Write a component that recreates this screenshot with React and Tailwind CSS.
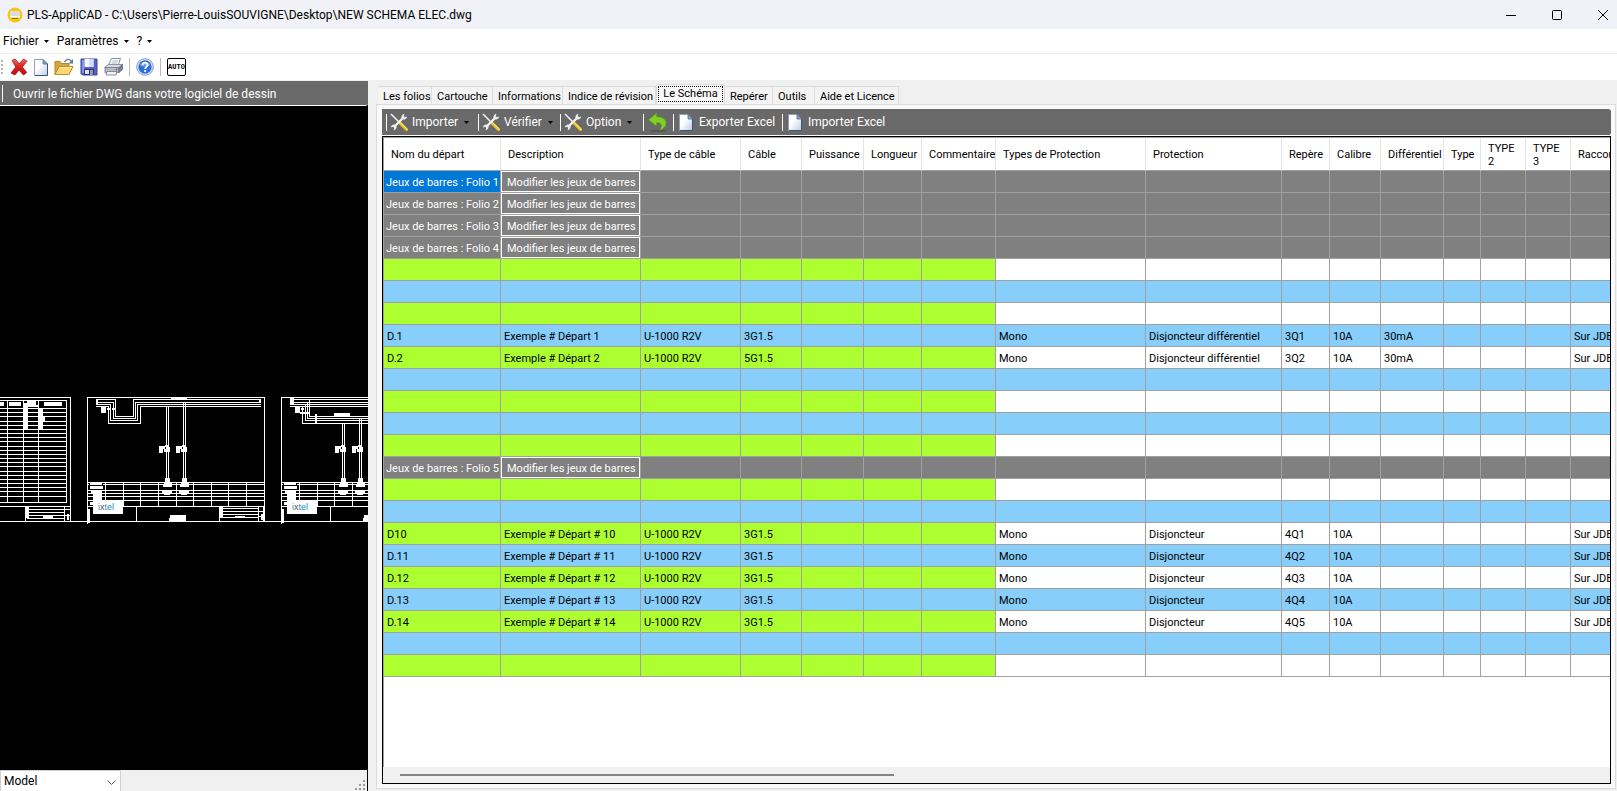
const columns = [
  { label: 'Nom du départ', width: 'w-[117px]' },
  { label: 'Description', width: 'w-[140px]' },
  { label: 'Type de câble', width: 'w-[100px]' },
  { label: 'Câble', width: 'w-[61px]' },
  { label: 'Puissance', width: 'w-[62px]' },
  { label: 'Longueur', width: 'w-[58px]' },
  { label: 'Commentaire', width: 'w-[74px]' },
  { label: 'Types de Protection', width: 'w-[150px]' },
  { label: 'Protection', width: 'w-[136px]' },
  { label: 'Repère', width: 'w-[48px]' },
  { label: 'Calibre', width: 'w-[51px]' },
  { label: 'Différentiel', width: 'w-[63px]' },
  { label: 'Type', width: 'w-[37px]' },
  { label: 'TYPE 2', width: 'w-[45px]' },
  { label: 'TYPE 3', width: 'w-[45px]' },
  { label: 'Raccordement', width: 'w-[90px]' },
]

const bar = (n) => ({ kind: 'bar', name: `Jeux de barres : Folio ${n}` })
const green = (cells = []) => ({ kind: 'green', cells })
const blue = (cells = []) => ({ kind: 'blue', cells })
const line = (name, desc, cable, prot, rep, diff = '') => [
  name, desc, 'U-1000 R2V', cable, '', '', '', 'Mono', prot, rep, '10A', diff, '', '', '', 'Sur JDB',
]

const rows = [
  bar(1),
  bar(2),
  bar(3),
  bar(4),
  green(),
  blue(),
  green(),
  blue(line('D.1', 'Exemple # Départ 1', '3G1.5', 'Disjoncteur différentiel', '3Q1', '30mA')),
  green(line('D.2', 'Exemple # Départ 2', '5G1.5', 'Disjoncteur différentiel', '3Q2', '30mA')),
  blue(),
  green(),
  blue(),
  green(),
  bar(5),
  green(),
  blue(),
  green(line('D10', 'Exemple # Départ # 10', '3G1.5', 'Disjoncteur', '4Q1')),
  blue(line('D.11', 'Exemple # Départ # 11', '3G1.5', 'Disjoncteur', '4Q2')),
  green(line('D.12', 'Exemple # Départ # 12', '3G1.5', 'Disjoncteur', '4Q3')),
  blue(line('D.13', 'Exemple # Départ # 13', '3G1.5', 'Disjoncteur', '4Q4')),
  green(line('D.14', 'Exemple # Départ # 14', '3G1.5', 'Disjoncteur', '4Q5')),
  blue(),
  green(),
]

const tabs = [
  { label: 'Les folios', width: 'w-[54px]' },
  { label: 'Cartouche', width: 'w-[61px]' },
  { label: 'Informations', width: 'w-[70px]' },
  { label: 'Indice de révision', width: 'w-[93px]' },
  { label: 'Le Schéma', width: 'w-[69px]', active: true },
  { label: 'Repérer', width: 'w-[48px]' },
  { label: 'Outils', width: 'w-[42px]' },
  { label: 'Aide et Licence', width: 'w-[84px]' },
]

function Caret() {
  return (
    <svg width="5" height="3" viewBox="0 0 5 3" className="shrink-0" aria-hidden="true">
      <path d="M0 0h5L2.5 3z" fill="#000" />
    </svg>
  )
}

function AppIcon() {
  return (
    <svg width="16" height="16" viewBox="0 0 16 16" aria-hidden="true">
      <circle cx="8" cy="8" r="7.5" fill="#fcc40c" />
      <rect x="3" y="4" width="10" height="6" rx="1" fill="#d9dde0" />
      <path d="M3 9h10v1.500H3z" fill="#fff" />
      <path d="M5 11.500h6" stroke="#8c6d10" />
    </svg>
  )
}

function CrossIcon() {
  return (
    <svg width="18" height="18" viewBox="0 0 18 18" aria-hidden="true">
      <defs>
        <linearGradient id="cross" x1="0" y1="0" x2="0" y2="1">
          <stop offset="0" stopColor="#ef7468" />
          <stop offset="0.45" stopColor="#d8241c" />
          <stop offset="1" stopColor="#b80e10" />
        </linearGradient>
      </defs>
      <path
        d="M2 2.500 5 1l4.200 4.800L13.500 1 17 3.200 12.300 9l4.500 5.500-3.300 2.500-4.500-4.800L4.800 17 1 15l4.800-6z"
        fill="url(#cross)"
        stroke="#a8141a"
        strokeWidth="0.800"
      />
    </svg>
  )
}

function PageIcon() {
  return (
    <svg width="14" height="17" viewBox="0 0 14 17" className="shrink-0" aria-hidden="true">
      <defs>
        <linearGradient id="page" x1="0" y1="0" x2="1" y2="1">
          <stop offset="0.4" stopColor="#fff" />
          <stop offset="1" stopColor="#b9cbe4" />
        </linearGradient>
      </defs>
      <path d="M.5.5h8.500l4.500 4.500v11.500H.5z" fill="url(#page)" stroke="#8ba0bd" />
      <path d="M13.500 5v11.500H1" fill="none" stroke="#39557d" />
      <path d="M9 .5V5h4.500z" fill="#8fa8c9" stroke="#4e6a92" strokeWidth="0.800" />
    </svg>
  )
}

function FolderIcon() {
  return (
    <svg width="20" height="18" viewBox="0 0 20 18" aria-hidden="true">
      <path d="M1 3.500h5l1.500 2H15v11H1z" fill="#d9a43a" stroke="#b9852a" />
      <path d="M1 16.500 5 8.500h14l-4 8z" fill="#fbd873" stroke="#c08a26" />
      <path d="M5.500 9.500h12" stroke="#fff0b8" />
      <path d="M10.500 4C12 .8 15 .6 17 3" fill="none" stroke="#7189a8" strokeWidth="1.500" />
      <path d="M19 1v4.500h-4.500z" fill="#5b7697" />
    </svg>
  )
}

function SaveIcon() {
  return (
    <svg width="18" height="18" viewBox="0 0 18 18" aria-hidden="true">
      <path d="M1 1h16v16H2.500L1 15.500z" fill="#5560c4" stroke="#3c4499" />
      <path d="M2 2h2v13H2z" fill="#8e98ea" />
      <rect x="4.500" y="1" width="9" height="8" fill="#f6f8ff" />
      <path d="M9 9V1h4.500v8z" fill="#d3dcf3" />
      <rect x="4" y="11" width="10" height="6" fill="#30346c" />
      <rect x="5" y="12" width="4" height="4" fill="#dfe3f0" />
      <rect x="10" y="12" width="3" height="5" fill="#9298b8" />
    </svg>
  )
}

function PrintIcon() {
  return (
    <svg width="19" height="18" viewBox="0 0 19 18" aria-hidden="true">
      <path d="M7.500.5h9L14 8H4z" fill="#fff" stroke="#8a9099" />
      <path d="M8.500 3h5.500M7.500 5h5.500" stroke="#9db0c8" />
      <path d="m1 9 3.500-2.500h14L15 10H1z" fill="#d5d9e0" stroke="#7a818c" strokeWidth="0.800" />
      <path d="M1 9.500h14v5H1z" fill="#b4bac6" stroke="#6e7684" strokeWidth="0.800" />
      <path d="m15 9.500 3.500-3v5l-3.500 3z" fill="#7b8494" stroke="#5f6877" strokeWidth="0.800" />
      <path d="M3 13.500h10L12 17H2z" fill="#eef1f6" stroke="#707988" strokeWidth="0.800" />
      <circle cx="12.500" cy="11.500" r="0.900" fill="#d8402a" />
    </svg>
  )
}

function HelpIcon() {
  return (
    <svg width="18" height="18" viewBox="0 0 18 18" aria-hidden="true">
      <circle cx="9" cy="9" r="8.300" fill="#dce7f6" stroke="#7f9cc8" />
      <circle cx="9" cy="9" r="6.700" fill="#2f6fd6" />
      <path d="M3.500 7a6 5 0 0 1 11 0c-3 2-8 2-11 0z" fill="#6fa2ee" />
      <path d="M6.600 7.200C6.600 3.700 11.600 4 11.500 7c0 1.800-2.300 1.900-2.300 3.900" fill="none" stroke="#fff" strokeWidth="1.800" />
      <circle cx="9.200" cy="13.100" r="1.100" fill="#fff" />
    </svg>
  )
}

function ToolsIcon() {
  return (
    <svg width="18" height="18" viewBox="0 0 18 18" className="shrink-0" aria-hidden="true">
      <path d="m1 1 9 9" stroke="#f5f5f5" strokeWidth="1.500" />
      <path d="m9.500 9.500 7 7" stroke="#f3c526" strokeWidth="3" strokeLinecap="round" />
      <path d="m10.500 9.500 7 7" stroke="#fff0a0" strokeWidth="0.800" />
      <path d="M13.500 4.500 4 14" stroke="#f2f2f2" strokeWidth="2.300" />
      <path d="M14.500.8a3.300 3.300 0 0 0-2.800 4.700 3.300 3.300 0 0 0 5.500-2L15 4.200 13.700 3z" fill="#ededed" />
      <path d="M3.500 17.200a3.300 3.300 0 0 0 2.800-4.700 3.300 3.300 0 0 0-5.500 2l2.200-.7L4.300 15z" fill="#ededed" />
    </svg>
  )
}

function UndoIcon() {
  return (
    <svg width="19" height="19" viewBox="0 0 19 19" className="shrink-0" aria-hidden="true">
      <ellipse cx="10" cy="18" rx="8" ry="1" fill="#555" />
      <path
        d="M8.500.3.500 6.800l8 6.200V9.700c4.500-.4 6.500 1.500 3.500 7.800 9-4.500 8-13.500-3.500-13.800z"
        fill="#7ed321"
        stroke="#5ba514"
        strokeWidth="0.600"
      />
    </svg>
  )
}

const Divider = () => <span className="h-[18px] w-px bg-[#bdbdbd]" />
const Separator = () => <span className="h-[17px] w-px shrink-0 bg-white" />

function TitleBar() {
  return (
    <header className="flex h-[29px] shrink-0 items-center bg-[#f1f2f7] pl-[7px] text-xs text-black">
      <AppIcon />
      <h1 className="ml-1 grow">PLS-AppliCAD - C:\Users\Pierre-LouisSOUVIGNE\Desktop\NEW SCHEMA ELEC.dwg</h1>
      <div className="-mr-[9px] flex">
        <button type="button" aria-label="Réduire" className="flex h-[27px] w-[46px] items-center justify-center">
          <svg width="10" height="10" viewBox="0 0 10 10">
            <path d="M0 5.500h10" stroke="#000" />
          </svg>
        </button>
        <button type="button" aria-label="Agrandir" className="flex h-[27px] w-[46px] items-center justify-center">
          <svg width="10" height="10" viewBox="0 0 10 10">
            <rect x="0.500" y="0.500" width="9" height="9" rx="1" fill="none" stroke="#000" />
          </svg>
        </button>
        <button type="button" aria-label="Fermer" className="flex h-[27px] w-[46px] items-center justify-center">
          <svg width="10" height="10" viewBox="0 0 10 10">
            <path d="m0 0 10 10M10 0 0 10" stroke="#000" />
          </svg>
        </button>
      </div>
    </header>
  )
}

function MenuBar() {
  return (
    <nav className="flex h-6 shrink-0 items-center gap-2 bg-white pl-[3px] text-xs text-black">
      {['Fichier', 'Paramètres', '?'].map((item) => (
        <button key={item} type="button" className="flex items-center gap-[5px]">
          {item}
          <Caret />
        </button>
      ))}
    </nav>
  )
}

function ToolBar() {
  return (
    <div className="flex h-[27px] shrink-0 items-center gap-[6px] border-t border-[#ececec] bg-white pl-px">
      <span className="mr-px h-[14px] border-l-2 border-dotted border-[#b4b4b4]" />
      <button type="button" aria-label="Fermer le dessin"><CrossIcon /></button>
      <button type="button" aria-label="Nouveau"><PageIcon /></button>
      <button type="button" aria-label="Ouvrir"><FolderIcon /></button>
      <button type="button" aria-label="Enregistrer"><SaveIcon /></button>
      <button type="button" aria-label="Imprimer"><PrintIcon /></button>
      <Divider />
      <button type="button" aria-label="Aide"><HelpIcon /></button>
      <Divider />
      <button
        type="button"
        className="flex h-[18px] w-[19px] items-center justify-center rounded-[2px] border border-black bg-white font-['Liberation_Mono'] text-[7px] font-bold leading-none text-black"
      >
        AUTO
      </button>
    </div>
  )
}

/* one folio of the electrical drawing, drawn from its top left corner */
function Folio({ x, children }) {
  return (
    <g transform={`translate(${x} 397)`}>
      <path d="M.5 127V.5h177v124M.5 85.500h177M0 109.500h177M49.500 110v14M132.500 110v14" />
      <path d="M0 87.500h177M0 93.500h177M0 96.500h177M0 99.500h177M0 103.500h177" />
      <path d="M18.500 86v23M36.500 86v23M53.500 86v23M71.500 86v23M89.500 86v23M106.500 86v23M124.500 86v23M141.500 86v23M159.500 86v23" />
      <path d="M133 111.500h38M133 114.500h38M133 117.500h38M133 120.500h38M171.500 110v14M176.500 110v14M171 114.500h6M171 119.500h6" />
      <path d="M133 110h3v11h-3zM148 119h10v2h-10zM174 117h3v6h-3z" fill="#fff" stroke="none" />
      <path d="M2 86h14v4H2z" fill="#000" stroke="none" />
      <path d="M3 86h12v2H3zM3 89h13v3H3zM4 94h11v2H4zM6 97h9v7H6zM3 105h10v3H3zM0 112h3v14H0z" fill="#fff" stroke="none" />
      <path d="M6 104h30v13H6z" fill="#fff" stroke="none" />
      <text x="11" y="113" fill="#2b8cbe" stroke="none" className="font-['Liberation_Sans'] text-[9px]">
        i<tspan fill="#555">x</tspan>tel
      </text>
      <path d="M83 118h16v6H82z" fill="#fff" stroke="none" />
      {children}
    </g>
  )
}

function Breaker({ x, busY }) {
  return (
    <g transform={`translate(${x} 0)`}>
      <path d={`M2.500 ${busY}V84M4.500 ${busY}V84`} />
      <path d="M-5 49h6v3h-2v4h-4zM1 48h3v2H1zM3 50h3v2H3zM0 52h6v3H0z" fill="#fff" stroke="none" />
      <path d="M1 81h5v5h2v4H-1v-3l2-2zM-2 94h10v2H6v2H0v-2h-2z" fill="#fff" stroke="none" />
    </g>
  )
}

function Drawing() {
  const tableRows = Array.from({ length: 22 }, (_, i) => Math.round(408 + i * 4.17) + 0.5)
  return (
    <svg width="368" height="664" viewBox="0 106 368 664" className="block" role="img" aria-label="Dessin">
      <g fill="none" stroke="#fff" strokeWidth="1" shapeRendering="crispEdges">
        <path d="M0 397.500h70.500V521M0 400.500h66.500v102H0M7.500 400v103M23.500 400v103M38.500 400v103" />
        {tableRows.map((y) => (
          <path key={y} d={`M0 ${y}h66`} />
        ))}
        <path
          d="M0 402h4v4H0zM9 402h12v4H9zM24 403h3v-2h9v4h2v2H24zM23 405h5v25h-5zM44 402h18v4H44zM39 408h4v8h2v5h-2v9h-4z"
          fill="#fff"
          stroke="none"
        />
        <path d="M0 506.500h70M25.500 506v15M27 509.500h38M27 512.500h38M27 515.500h38M27 518.500h38M64.500 506v15M65 509.500h5M65 515.500h5" />
        <path d="M26 506h3v12h-3zM43 515h10v3H43zM67 514h2v6h-2z" fill="#fff" stroke="none" />
        <Folio x={87}>
          <path d="M9 2.500H28.500V19.500H46.500V2.500H174M9 5.500H26.500V21.500H48.500V5.500H174M9 7.500H23.500V23.500H50.500V7.500H174M9 9.500H21.500V26.500H53.500V9.500H174" />
          <path
            d="M9 2h2v5H9zM14 10h5v6h-5zM20 11h3v2h-3zM25 11h3v2h-3zM84 0h16v2H84zM172 2h2v4h-2z"
            fill="#fff"
            stroke="none"
          />
          <Breaker x={77} busY={9} />
          <Breaker x={94} busY={6} />
        </Folio>
        <Folio x={281}>
          <path d="M9 2.500h90M9 5.500h90M9 7.500h90M9 9.500h90M28.500 2V19.500H99M26.500 5V21.500H99M24.500 7V23.500H99M21.500 9V26.500H99" />
          <path
            d="M9 1h4v7H9zM14 10h5v6h-5zM20 11h3v2h-3zM19 15h9v2h-9zM34 17h2v9h-2zM53 16h16v3H53z"
            fill="#fff"
            stroke="none"
          />
          <Breaker x={59} busY={26} />
          <Breaker x={76} busY={22} />
        </Folio>
        <path d="M0 521.500h368" />
      </g>
    </svg>
  )
}

function DrawingPane() {
  return (
    <section className="flex w-[368px] shrink-0 flex-col bg-black">
      <div className="flex h-[25px] shrink-0 items-center rounded-br-[3px] border-b border-white bg-[#696969] pl-[2px] pt-px">
        <Separator />
        <button type="button" className="ml-[10px] text-xs text-white">Ouvrir le fichier DWG dans votre logiciel de dessin</button>
      </div>
      <div className="min-h-0 grow overflow-hidden">
        <Drawing />
      </div>
      <div className="mr-px flex h-[21px] shrink-0 items-stretch justify-between bg-[#f0f0f0]">
        <div className="relative w-[121px] border border-b-0 border-[#d0d0d0] bg-white">
          <select aria-label="Espace" className="block h-5 w-full appearance-none pb-px pl-[3px] text-xs text-black outline-none">
            <option>Model</option>
          </select>
          <svg width="9" height="5" viewBox="0 0 9 5" className="pointer-events-none absolute right-1 top-[9px]">
            <path d="m.5.5 4 4 4-4" fill="none" stroke="#555" />
          </svg>
        </div>
        <svg width="11" height="11" viewBox="0 0 11 11" className="mr-px self-end" fill="#9a9a9a" aria-hidden="true">
          <path d="M8 0h2v2H8zM4 4h2v2H4zM8 4h2v2H8zM0 8h2v2H0zM4 8h2v2H4zM8 8h2v2H8z" />
        </svg>
      </div>
    </section>
  )
}

function MenuTool({ label, width }) {
  return (
    <div className={`flex items-center ${width}`}>
      <Separator />
      <button type="button" className="ml-[3px] flex items-center">
        <ToolsIcon />
        <span className="ml-1 mr-[6px]">{label}</span>
        <Caret />
      </button>
    </div>
  )
}

function ExcelTool({ label, width }) {
  return (
    <div className={`flex items-center ${width}`}>
      <Separator />
      <button type="button" className="ml-[5px] flex items-center gap-[6px]">
        <PageIcon />
        {label}
      </button>
    </div>
  )
}

function Grid() {
  return (
    <div className="flex min-h-0 grow flex-col overflow-hidden border border-black bg-white">
      <div className="min-h-0 grow overflow-hidden border-l border-t border-[#a0a0a0]">
        <table className="w-[1277px] table-fixed border-separate border-spacing-0 text-[11px] leading-[13px] text-black">
          <thead>
            <tr className="h-[33px]">
              {columns.map(({ label, width }) => (
                <th
                  key={label}
                  className={`${width} border-b border-r border-b-[#a0a0a0] border-r-[#e5e5e5] pb-0 pl-[7px] pt-px text-left align-middle font-normal`}
                >
                  {/* the two numbered types break before their digit */}
                  {label.startsWith('TYPE') ? <span className="block w-8">{label}</span> : label}
                </th>
              ))}
            </tr>
          </thead>
          <tbody>
            {rows.map((row, i) => (
              <tr key={i} className="h-[22px]">
                {columns.map(({ label }, c) => {
                  if (row.kind === 'bar') {
                    const selected = i === 0 && c === 0
                    return (
                      <td
                        key={label}
                        className={`h-[22px] whitespace-nowrap border-b border-r border-[#a0a0a0] p-0 text-white ${selected ? 'bg-[#0078d7]' : 'bg-[#808080]'}`}
                      >
                        {c === 0 && <span className="block pl-[2px] pt-px">{row.name}</span>}
                        {c === 1 && (
                          <button type="button" className="block h-[21px] w-full border border-white pl-[5px] pt-px text-left">
                            Modifier les jeux de barres
                          </button>
                        )}
                      </td>
                    )
                  }
                  let fill = 'bg-[#87cefa]'
                  if (row.kind === 'green') fill = c < 7 ? 'bg-[#adff2f]' : 'bg-white'
                  return (
                    <td key={label} className={`h-[22px] whitespace-nowrap border-b border-r border-[#a0a0a0] pb-0 pl-[3px] pr-0 pt-px ${fill}`}>
                      {row.cells[c]}
                    </td>
                  )
                })}
              </tr>
            ))}
          </tbody>
        </table>
      </div>
      <div className="flex h-4 shrink-0 items-center bg-[#f0f0f0] px-[17px]">
        <div className="h-[2px] w-[494px] bg-[#858585]" />
      </div>
    </div>
  )
}

function SchemaPane() {
  return (
    <section className="flex min-w-0 grow flex-col bg-[#f0f0f0] pb-[2px] pl-2 pt-[3px] text-[11px] text-black">
      <div role="tablist" className="flex h-5 shrink-0 items-end pl-[2px]">
        {tabs.map(({ label, width, active }) =>
          active ? (
            <button
              key={label}
              type="button"
              role="tab"
              aria-selected="true"
              className={`${width} h-5 whitespace-nowrap border border-b-0 border-[#dcdcdc] bg-[#f9f9f9] p-px pb-[2px]`}
            >
              <span className="flex h-4 items-center justify-center border border-dotted border-black">{label}</span>
            </button>
          ) : (
            <button
              key={label}
              type="button"
              role="tab"
              aria-selected="false"
              className={`${width} h-[18px] whitespace-nowrap border border-b-0 border-l-0 border-[#dcdcdc] bg-[#f3f3f3] pl-[5px] pt-[2px] text-left`}
            >
              {label}
            </button>
          )
        )}
      </div>
      <div className="mr-px flex min-h-0 grow flex-col border border-[#dcdcdc] bg-[#f9f9f9] pb-1 pl-[5px] pr-1 pt-1">
        <div className="flex h-[27px] shrink-0 items-center rounded-r-[3px] border-b border-white bg-[#696969] pl-1 text-xs text-white">
          <MenuTool label="Importer" width="w-[92px]" />
          <MenuTool label="Vérifier" width="w-[82px]" />
          <MenuTool label="Option" width="w-[83px]" />
          <div className="flex w-[30px] items-center">
            <Separator />
            <button type="button" aria-label="Annuler" className="ml-1">
              <UndoIcon />
            </button>
          </div>
          <ExcelTool label="Exporter Excel" width="w-[109px]" />
          <ExcelTool label="Importer Excel" width="w-[109px]" />
        </div>
        <Grid />
      </div>
    </section>
  )
}

export default function App() {
  return (
    <div className="flex h-screen flex-col overflow-hidden bg-[#f0f0f0] font-['Roboto','Open_Sans',sans-serif]">
      <TitleBar />
      <MenuBar />
      <ToolBar />
      <main className="flex min-h-0 grow pt-px">
        <DrawingPane />
        <SchemaPane />
      </main>
    </div>
  )
}
